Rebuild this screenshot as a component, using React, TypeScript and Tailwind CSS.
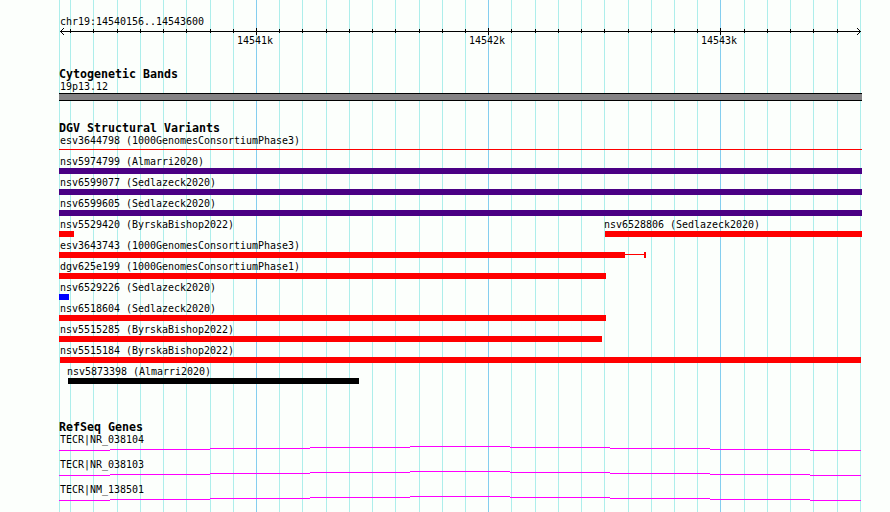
import React from 'react';

interface Feature {
  name: string;
  start: number;
  end: number;
  color: string;
  labelAt?: number;
  whisker?: number;
}

const MAJOR_TICKS = [256, 488, 720];
const MINOR_TICKS = [
  70, 93, 117, 140, 163, 186, 210, 233, 279, 302, 326, 349, 372, 395, 419, 442, 465, 511, 535, 558,
  581, 604, 628, 651, 674, 697, 744, 767, 790, 813, 837,
];
const GRID_EDGES = [59, 860];

const RED = 'bg-[#ff0000]';
const PURPLE = 'bg-[#4a0084]';

const variantRows: Feature[][] = [
  [{ name: 'nsv5974799 (Almarri2020)', start: 59, end: 862, color: PURPLE }],
  [{ name: 'nsv6599077 (Sedlazeck2020)', start: 59, end: 862, color: PURPLE }],
  [{ name: 'nsv6599605 (Sedlazeck2020)', start: 59, end: 862, color: PURPLE }],
  [
    { name: 'nsv5529420 (ByrskaBishop2022)', start: 59, end: 74, color: RED },
    { name: 'nsv6528806 (Sedlazeck2020)', start: 605, end: 862, color: RED, labelAt: 604 },
  ],
  [{ name: 'esv3643743 (1000GenomesConsortiumPhase3)', start: 59, end: 625, color: RED, whisker: 646 }],
  [{ name: 'dgv625e199 (1000GenomesConsortiumPhase1)', start: 59, end: 606, color: RED }],
  [{ name: 'nsv6529226 (Sedlazeck2020)', start: 59, end: 69, color: 'bg-[#0000ff]' }],
  [{ name: 'nsv6518604 (Sedlazeck2020)', start: 59, end: 606, color: RED }],
  [{ name: 'nsv5515285 (ByrskaBishop2022)', start: 59, end: 602, color: RED }],
  [{ name: 'nsv5515184 (ByrskaBishop2022)', start: 60, end: 861, color: RED }],
  [{ name: 'nsv5873398 (Almarri2020)', start: 68, end: 359, color: 'bg-black', labelAt: 67 }],
];

const genes = ['TECR|NR_038104', 'TECR|NR_038103', 'TECR|NM_138501'];

// [x, width, y] of each step of the intron line
const geneSteps = [
  [59, 51, 4], [110, 100, 3], [210, 100, 2], [310, 100, 1], [410, 100, 0],
  [510, 100, 1], [610, 100, 2], [710, 100, 3], [810, 51, 4],
];

const GridLines: React.FC = () => (
  <svg className="absolute inset-0 -z-10" width="890" height="512" shapeRendering="crispEdges">
    {[...GRID_EDGES, ...MINOR_TICKS].map((x) => (
      <rect key={x} x={x} y="0" width="1" height="512" fill="#adeeeb" />
    ))}
    {MAJOR_TICKS.map((x) => (
      <rect key={x} x={x} y="0" width="1" height="512" fill="#84ceef" />
    ))}
  </svg>
);

const Ruler: React.FC = () => (
  <svg className="block" width="890" height="9" shapeRendering="crispEdges">
    <rect x="60" y="4" width="801" height="1" />
    {MINOR_TICKS.map((x) => (
      <rect key={x} x={x} y="2" width="1" height="4" />
    ))}
    {MAJOR_TICKS.map((x) => (
      <rect key={x} x={x} y="1" width="1" height="7" />
    ))}
    {[1, 2, 3].map((d) => (
      <React.Fragment key={d}>
        <rect x={60 + d} y={4 - d} width="1" height="1" />
        <rect x={60 + d} y={4 + d} width="1" height="1" />
        <rect x={860 - d} y={4 - d} width="1" height="1" />
        <rect x={860 - d} y={4 + d} width="1" height="1" />
      </React.Fragment>
    ))}
  </svg>
);

const TrackTitle: React.FC<{ children: React.ReactNode }> = ({ children }) => (
  <h2 className="h-3 pl-[59px] text-[11.63px] leading-[12px] font-bold">{children}</h2>
);

const VariantRow: React.FC<{ features: Feature[] }> = ({ features }) => (
  <div className="flex h-[21px]">
    {features.map((f, i) => {
      const prevEnd = i > 0 ? features[i - 1].end : 0;
      return (
        <div key={f.name} className="shrink-0" style={{ marginLeft: f.start - prevEnd, width: f.end - f.start }}>
          <div className="h-[15px] leading-[17px]" style={{ textIndent: (f.labelAt ?? 60) - f.start }}>
            {f.name}
          </div>
          <div className={`h-1.5 ${f.color}`}></div>
        </div>
      );
    })}
    {features.map(
      (f) =>
        f.whisker && (
          <div key={f.name} className="mt-[15px] flex h-1.5" style={{ width: f.whisker - f.end }}>
            <div className="mt-0.5 h-px flex-1 bg-[#ff0000]"></div>
            <div className="w-0.5 bg-[#ff0000]"></div>
          </div>
        )
    )}
  </div>
);

const GeneRow: React.FC<{ name: string }> = ({ name }) => (
  <div className="h-[25px]">
    <div className="h-[13px] pl-[60px] leading-[14px]">{name}</div>
    <svg className="block" width="890" height="5" shapeRendering="crispEdges">
      {geneSteps.map(([x, width, y]) => (
        <rect key={x} x={x} y={y} width={width} height="1" fill="#ff00ff" />
      ))}
    </svg>
  </div>
);

const App: React.FC = () => {
  return (
    <div className="relative isolate h-[512px] w-[890px] overflow-hidden bg-[#fcfffc] pt-[14px] font-['DejaVu_Sans_Mono',monospace] text-[9.97px] whitespace-nowrap text-black">
      <GridLines />
      <div className="h-[13px] pl-[60px] leading-[16px]">chr19:14540156..14543600</div>
      <Ruler />
      <div className="flex h-8 gap-[196px] pl-[237px] leading-[10px]">
        <span>14541k</span>
        <span>14542k</span>
        <span>14543k</span>
      </div>

      <TrackTitle>Cytogenetic Bands</TrackTitle>
      <div className="h-[13px] pl-[60px] leading-[13px]">19p13.12</div>
      <div className="ml-[59px] h-2 w-[803px] border-y border-black bg-[#848284]"></div>

      <div className="pt-[21px]">
        <TrackTitle>DGV Structural Variants</TrackTitle>
        <div className="h-[15px] pl-[60px] leading-[13px]">esv3644798 (1000GenomesConsortiumPhase3)</div>
        <div className="mb-[3px] ml-[59px] h-px w-[803px] bg-[#ff0000]"></div>
        {variantRows.map((features) => (
          <VariantRow key={features[0].name} features={features} />
        ))}
      </div>

      <div className="pt-[37px]">
        <TrackTitle>RefSeq Genes</TrackTitle>
        {genes.map((name) => (
          <GeneRow key={name} name={name} />
        ))}
      </div>
    </div>
  );
};

export default App;
